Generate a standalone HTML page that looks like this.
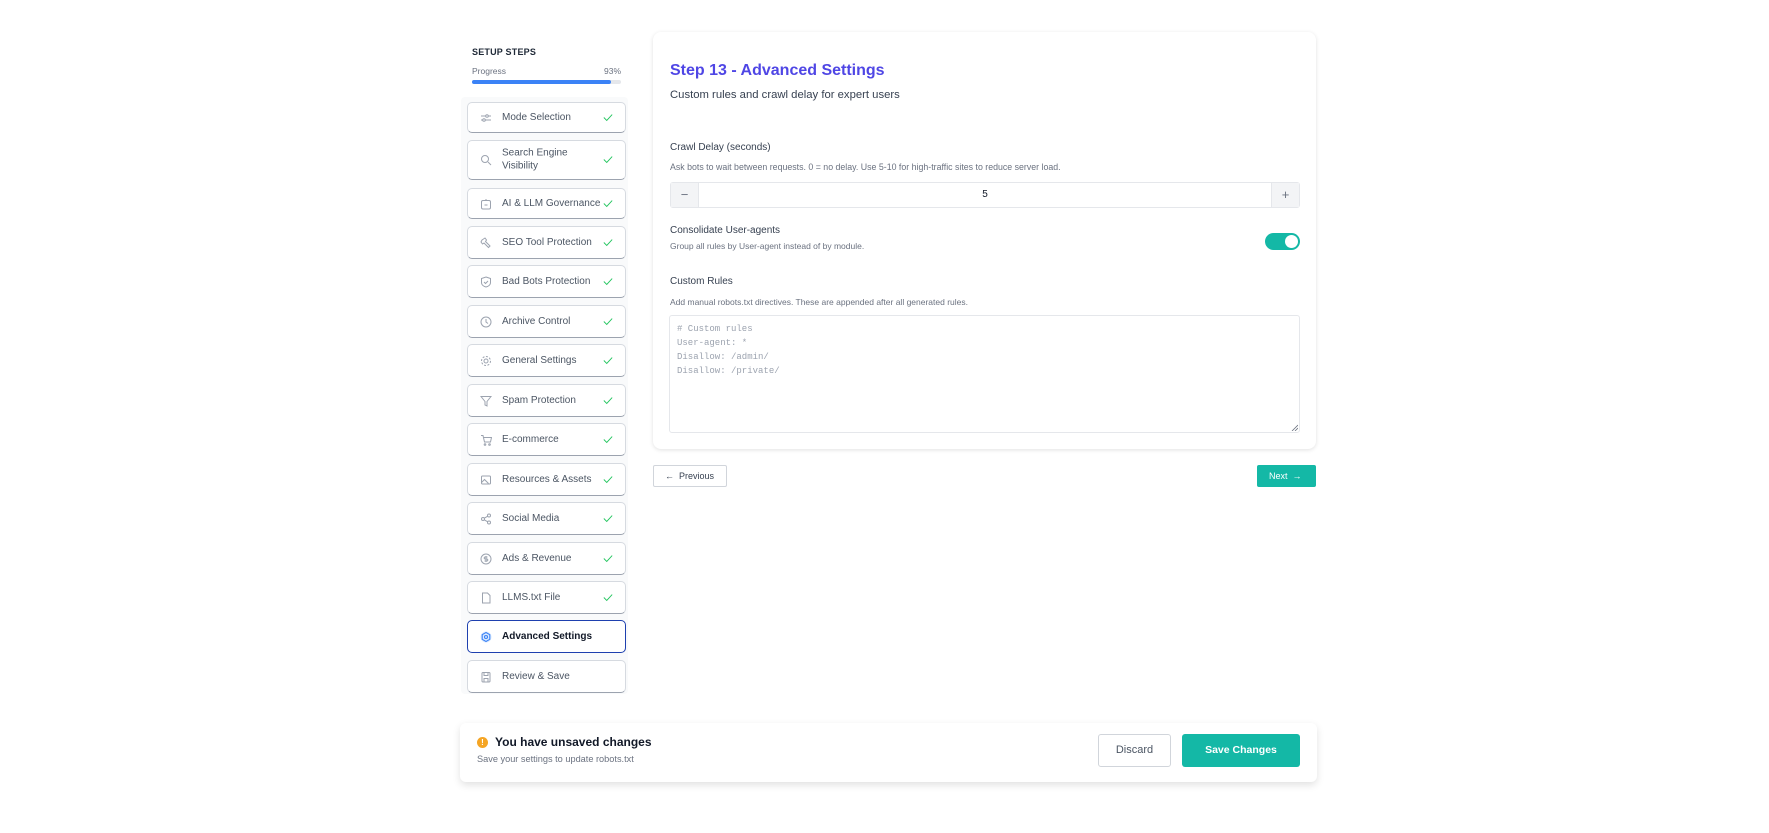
<!DOCTYPE html>
<html><head><meta charset="utf-8">
<style>
*{box-sizing:border-box;margin:0;padding:0}
body{width:1769px;height:833px;background:#fff;font-family:"Liberation Sans",sans-serif;position:relative;overflow:hidden;color:#374151}
.a{position:absolute}
.side{left:461px;top:97px;width:167px;height:597px;background:#f9fafb;border-radius:4px}
.item{position:absolute;left:467px;width:159px;height:33px;background:#fff;border:1px solid #d6dae0;border-bottom:1.5px solid #9ca3af;border-radius:5px;font-size:10px;color:#4b5563}
.item .t{position:absolute;left:34px;top:50%;transform:translateY(-50%);line-height:12.5px}
.item .ic{position:absolute;left:12px;top:50%;margin-top:-6px;width:12px;height:12px}
.item .ck{position:absolute;right:12px;top:50%;margin-top:-5px}
.card{left:653px;top:32px;width:663px;height:417px;background:#fff;border-radius:8px;box-shadow:0 1px 4px rgba(0,0,0,.12)}
.lbl{font-size:10px;color:#374151}
.hlp{font-size:9.2px;color:#6b7280;transform:scaleX(.85);transform-origin:left}
</style></head><body>
<div class="a" style="left:472px;top:47px;font-size:9px;font-weight:bold;color:#1f2937;letter-spacing:.2px">SETUP STEPS</div>
<div class="a" style="left:472px;top:66px;font-size:8.5px;color:#6b7280">Progress</div>
<div class="a" style="left:604px;top:66px;font-size:8.5px;color:#6b7280">93%</div>
<div class="a" style="left:472px;top:80px;width:149px;height:3.5px;background:#e5e7eb;border-radius:2px"><div style="width:93%;height:100%;background:#3b82f6;border-radius:2px"></div></div>
<div class="a side"></div>

<svg width="0" height="0" style="position:absolute"><defs>
<symbol id="chk" viewBox="0 0 12 10"><path d="M1 5l3.5 3.5L11 1.5" fill="none" stroke="#22c55e" stroke-width="1.1"/></symbol>
</defs></svg>

<div class="item" style="top:102px;height:31px"><svg class="ic" viewBox="0 0 12 12" fill="none" stroke="#9ca3af" stroke-width="1"><path d="M1 4h10M1 8h10"/><circle cx="7" cy="4" r="1.3" fill="#fff"/><circle cx="4" cy="8" r="1.3" fill="#fff"/></svg><span class="t">Mode Selection</span><svg class="ck" width="10" height="9"><use href="#chk"/></svg></div>
<div class="item" style="top:140px;height:40px"><svg class="ic" viewBox="0 0 12 12" fill="none" stroke="#9ca3af" stroke-width="1"><circle cx="5" cy="5" r="3.5"/><path d="M8 8l3 3"/></svg><span class="t">Search Engine<br>Visibility</span><svg class="ck" width="10" height="9"><use href="#chk"/></svg></div>
<div class="item" style="top:188px;height:31px"><svg class="ic" viewBox="0 0 12 12" fill="none" stroke="#9ca3af" stroke-width="1"><rect x="1.5" y="2.5" width="9" height="8.5" rx="1.5"/><path d="M6 1v1.5M4.5 7h3"/></svg><span class="t">AI &amp; LLM Governance</span><svg class="ck" width="10" height="9"><use href="#chk"/></svg></div>
<div class="item" style="top:226px"><svg class="ic" viewBox="0 0 12 12" fill="none" stroke="#9ca3af" stroke-width="1"><path d="M2 3l3-2 1.5 2-1 1.5 4.5 4.5-1.5 1.5-4.5-4.5L2.5 7 1 5z"/></svg><span class="t">SEO Tool Protection</span><svg class="ck" width="10" height="9"><use href="#chk"/></svg></div>
<div class="item" style="top:265px"><svg class="ic" viewBox="0 0 12 12" fill="none" stroke="#9ca3af" stroke-width="1"><path d="M6 1l4.5 1.5v4C10.5 9 8 10.5 6 11 4 10.5 1.5 9 1.5 6.5v-4z"/><path d="M4 6l1.5 1.5L8 5"/></svg><span class="t">Bad Bots Protection</span><svg class="ck" width="10" height="9"><use href="#chk"/></svg></div>
<div class="item" style="top:305px"><svg class="ic" viewBox="0 0 12 12" fill="none" stroke="#9ca3af" stroke-width="1"><circle cx="6" cy="6" r="5"/><path d="M6 3v3l2 1.5"/></svg><span class="t">Archive Control</span><svg class="ck" width="10" height="9"><use href="#chk"/></svg></div>
<div class="item" style="top:344px"><svg class="ic" viewBox="0 0 12 12" fill="none" stroke="#9ca3af" stroke-width="1"><circle cx="6" cy="6" r="2"/><circle cx="6" cy="6" r="4.5" stroke-dasharray="2 1.5"/></svg><span class="t">General Settings</span><svg class="ck" width="10" height="9"><use href="#chk"/></svg></div>
<div class="item" style="top:384px"><svg class="ic" viewBox="0 0 12 12" fill="none" stroke="#9ca3af" stroke-width="1"><path d="M1 1.5h10L7 6.5V11L5 10V6.5z"/></svg><span class="t">Spam Protection</span><svg class="ck" width="10" height="9"><use href="#chk"/></svg></div>
<div class="item" style="top:423px"><svg class="ic" viewBox="0 0 12 12" fill="none" stroke="#9ca3af" stroke-width="1"><path d="M1 1.5h2l1.5 6.5h6l1-4.5H3.5"/><circle cx="5" cy="10.5" r=".8"/><circle cx="9.5" cy="10.5" r=".8"/></svg><span class="t">E-commerce</span><svg class="ck" width="10" height="9"><use href="#chk"/></svg></div>
<div class="item" style="top:463px"><svg class="ic" viewBox="0 0 12 12" fill="none" stroke="#9ca3af" stroke-width="1"><rect x="1.5" y="2" width="9" height="8" rx="1"/><path d="M1.5 8.5l3-3 4 4"/></svg><span class="t">Resources &amp; Assets</span><svg class="ck" width="10" height="9"><use href="#chk"/></svg></div>
<div class="item" style="top:502px"><svg class="ic" viewBox="0 0 12 12" fill="none" stroke="#9ca3af" stroke-width="1"><circle cx="9" cy="2.5" r="1.5"/><circle cx="3" cy="6" r="1.5"/><circle cx="9" cy="9.5" r="1.5"/><path d="M4.3 5.2l3.4-2M4.3 6.8l3.4 2"/></svg><span class="t">Social Media</span><svg class="ck" width="10" height="9"><use href="#chk"/></svg></div>
<div class="item" style="top:542px"><svg class="ic" viewBox="0 0 12 12" fill="none" stroke="#9ca3af" stroke-width="1"><circle cx="6" cy="6" r="5"/><path d="M7.5 4H5.2a1 1 0 000 2h1.6a1 1 0 010 2H4.5M6 3v6"/></svg><span class="t">Ads &amp; Revenue</span><svg class="ck" width="10" height="9"><use href="#chk"/></svg></div>
<div class="item" style="top:581px"><svg class="ic" viewBox="0 0 12 12" fill="none" stroke="#9ca3af" stroke-width="1"><path d="M2.5 1h5l2.5 2.5V11h-7.5z"/></svg><span class="t">LLMS.txt File</span><svg class="ck" width="10" height="9"><use href="#chk"/></svg></div>
<div class="item" style="top:620px;border:1.5px solid #1e40af;color:#111827;font-weight:bold"><svg class="ic" viewBox="0 0 12 12" fill="none" stroke="#3b82f6" stroke-width="1.1"><circle cx="6" cy="6" r="5.5" fill="#dbeafe" stroke="none"/><path d="M6 1.5l3.8 2.2v4.6L6 10.5 2.2 8.3V3.7z"/><circle cx="6" cy="6" r="1.5"/></svg><span class="t">Advanced Settings</span></div>
<div class="item" style="top:660px"><svg class="ic" viewBox="0 0 12 12" fill="none" stroke="#9ca3af" stroke-width="1"><rect x="2" y="1.5" width="8" height="9.5" rx="1"/><path d="M4 1.5v3h4v-3M4 11V7.5h4V11"/></svg><span class="t">Review &amp; Save</span></div>

<div class="a card"></div>
<div class="a" style="left:670px;top:62px;font-size:16px;font-weight:bold;color:#4f46e5">Step 13 - Advanced Settings</div>
<div class="a" style="left:670px;top:89px;font-size:11.3px;color:#374151">Custom rules and crawl delay for expert users</div>
<div class="a lbl" style="left:670px;top:142px">Crawl Delay (seconds)</div>
<div class="a hlp" style="left:670px;top:162px;font-size:8.8px;transform:none">Ask bots to wait between requests. 0 = no delay. Use 5-10 for high-traffic sites to reduce server load.</div>
<div class="a" style="left:670px;top:182px;width:630px;height:26px;border:1px solid #e5e7eb;border-radius:3px;display:flex">
<div style="width:28px;background:#f3f4f6;border-right:1px solid #e5e7eb;text-align:center;line-height:24px;color:#6b7280;font-size:13px">−</div>
<div style="flex:1;text-align:center;line-height:24px;font-size:10px;color:#111827">5</div>
<div style="width:28px;background:#f3f4f6;border-left:1px solid #e5e7eb;text-align:center;line-height:24px;color:#6b7280;font-size:13px">+</div></div>
<div class="a lbl" style="left:670px;top:225px">Consolidate User-agents</div>
<div class="a hlp" style="left:670px;top:241px;font-size:8.5px;transform:none">Group all rules by User-agent instead of by module.</div>
<div class="a" style="left:1265px;top:233px;width:35px;height:17px;background:#14b8a6;border-radius:9px"><div style="position:absolute;right:2px;top:2px;width:13px;height:13px;border-radius:50%;background:#fff"></div></div>
<div class="a lbl" style="left:670px;top:276px">Custom Rules</div>
<div class="a hlp" style="left:670px;top:297px;font-size:8.5px;transform:none">Add manual robots.txt directives. These are appended after all generated rules.</div>
<div class="a" style="left:669px;top:315px;width:631px;height:118px;border:1px solid #e5e7eb;border-radius:3px;padding:6px 7px;font-family:'Liberation Mono',monospace;font-size:9px;line-height:14px;color:#9ca3af;white-space:pre"># Custom rules
User-agent: *
Disallow: /admin/
Disallow: /private/</div>
<svg class="a" style="left:1291px;top:424px" width="7" height="7" stroke="#6b7280" stroke-width=".8"><path d="M1 7L7 1M4 7L7 4"/></svg>

<div class="a" style="left:653px;top:465px;width:74px;height:22px;border:1px solid #d1d5db;border-radius:2px;font-size:9px;color:#374151;line-height:20px;padding-left:11px">← &nbsp;Previous</div>
<div class="a" style="left:1257px;top:465px;width:59px;height:22px;background:#14b8a6;border-radius:2px;font-size:9px;color:#fff;line-height:22px;padding-left:12px">Next &nbsp;→</div>

<div class="a" style="left:460px;top:723px;width:857px;height:59px;background:#fff;border-radius:6px;box-shadow:0 3px 8px rgba(0,0,0,.12)"></div>
<div class="a" style="left:477px;top:737px;width:11px;height:11px;border-radius:50%;background:#f5a524;color:#fff;font-size:8px;line-height:11px;text-align:center;font-weight:bold">!</div>
<div class="a" style="left:495px;top:735px;font-size:12px;font-weight:bold;color:#111827">You have unsaved changes</div>
<div class="a" style="left:477px;top:754px;font-size:9.2px;color:#6b7280">Save your settings to update robots.txt</div>
<div class="a" style="left:1098px;top:734px;width:73px;height:33px;border:1px solid #d1d5db;border-radius:3px;text-align:center;line-height:31px;font-size:11px;color:#4b5563">Discard</div>
<div class="a" style="left:1182px;top:734px;width:118px;height:33px;background:#14b8a6;border-radius:3px;text-align:center;line-height:33px;font-size:10.5px;color:#fff;font-weight:bold">Save Changes</div>
</body></html>
